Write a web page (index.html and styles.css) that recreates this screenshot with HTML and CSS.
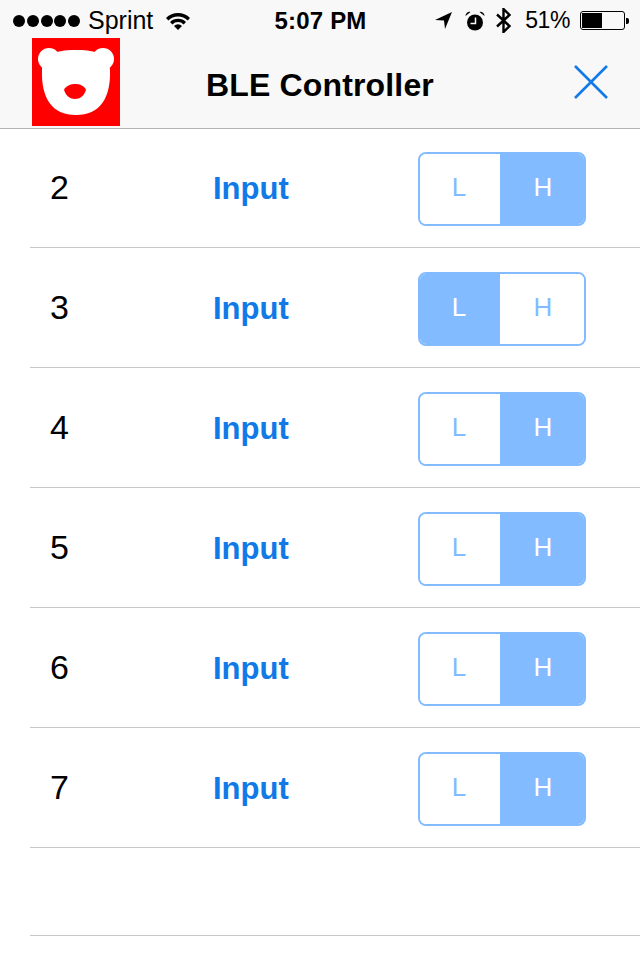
FILE: index.html
```html
<!DOCTYPE html>
<html lang="en">
<head>
    <meta charset="UTF-8">
    <meta name="viewport" content="width=device-width, initial-scale=1.0">
    <title>BLE Controller</title>
    <link rel="stylesheet" href="styles.css">
</head>
<body>
    <header class="top">
        <!-- status bar -->
        <div class="status">
            <div class="status-left">
                <span class="dots"><i></i><i></i><i></i><i></i><i></i></span>
                <span class="carrier">Sprint</span>
                <svg class="wifi" width="24" height="18" viewBox="0 0 24 18">
                    <path d="M0 6 A17 17 0 0 1 24 6 L21.6 8.4 A13.6 13.6 0 0 0 2.4 8.4 Z" fill="#000"/>
                    <path d="M4 10 A11.4 11.4 0 0 1 20 10 L17.6 12.4 A8 8 0 0 0 6.4 12.4 Z" fill="#000"/>
                    <path d="M8 14 A5.7 5.7 0 0 1 16 14 L12 18 Z" fill="#000"/>
                </svg>
            </div>
            <div class="clock">5:07 PM</div>
            <div class="status-right">
                <svg class="arrow" width="17" height="17" viewBox="0 0 17 17">
                    <path d="M17 0 L0 8 L9 8.5 L10 17 Z" fill="#000"/>
                </svg>
                <svg class="alarm" width="20" height="20" viewBox="0 0 20 20">
                    <circle cx="10" cy="11.5" r="8" fill="#000"/>
                    <path d="M10.5 6.5 V12.5 H5.5" fill="none" stroke="#f8f8f8" stroke-width="1.5"/>
                    <path d="M0.5 5 A4 4 0 0 1 5.5 1 Z M19.5 5 A4 4 0 0 0 14.5 1 Z" fill="#000"/>
                </svg>
                <svg class="bt" width="15" height="25" viewBox="0 0 15 25">
                    <path d="M1 6.5 L13.5 18 L7.5 24 V1 L13.5 7 L1 18.5" fill="none" stroke="#000" stroke-width="2.4"/>
                </svg>
                <span class="pct">51%</span>
                <span class="battery"><span class="battery-fill"></span></span>
                <span class="battery-tip"></span>
            </div>
        </div>
        <!-- nav bar -->
        <div class="nav">
            <svg class="logo" width="88" height="88" viewBox="0 0 88 88">
                <rect width="88" height="88" fill="#ff0000"/>
                <circle cx="17" cy="21" r="11" fill="#fff"/>
                <circle cx="71" cy="21" r="11" fill="#fff"/>
                <path d="M10 32 C10 14 30 12 44 12 C58 12 78 14 78 32 C79 60 68 77 44 77 C20 77 9 60 10 32 Z" fill="#fff"/>
                <path d="M32 52 C34 47 40 46 43 46 C47 46 52 47 54 52 C52 58 48 61 43 61 C38 61 34 58 32 52 Z" fill="#ff0000"/>
            </svg>
            <h1 class="title">BLE Controller</h1>
            <svg class="close" width="36" height="36" viewBox="0 0 36 36">
                <path d="M2 2 L34 34 M34 2 L2 34" stroke="#117AE8" stroke-width="2.6" fill="none"/>
            </svg>
        </div>
    </header>

    <ul class="pins">
        <li class="pin">
            <span class="pin-num">2</span>
            <span class="pin-mode">Input</span>
            <div class="seg"><span class="seg-btn">L</span><span class="seg-btn on">H</span></div>
        </li>
        <li class="pin">
            <span class="pin-num">3</span>
            <span class="pin-mode">Input</span>
            <div class="seg"><span class="seg-btn on">L</span><span class="seg-btn">H</span></div>
        </li>
        <li class="pin">
            <span class="pin-num">4</span>
            <span class="pin-mode">Input</span>
            <div class="seg"><span class="seg-btn">L</span><span class="seg-btn on">H</span></div>
        </li>
        <li class="pin">
            <span class="pin-num">5</span>
            <span class="pin-mode">Input</span>
            <div class="seg"><span class="seg-btn">L</span><span class="seg-btn on">H</span></div>
        </li>
        <li class="pin">
            <span class="pin-num">6</span>
            <span class="pin-mode">Input</span>
            <div class="seg"><span class="seg-btn">L</span><span class="seg-btn on">H</span></div>
        </li>
        <li class="pin">
            <span class="pin-num">7</span>
            <span class="pin-mode">Input</span>
            <div class="seg"><span class="seg-btn">L</span><span class="seg-btn on">H</span></div>
        </li>
        <li class="pin pin-empty"></li>
    </ul>
</body>
</html>
```

FILE: styles.css
```css
* {
    box-sizing: border-box;
    margin: 0;
    padding: 0;
    font-family: 'Liberation Sans', Arial, sans-serif;
}
body {
    width: 640px;
    height: 960px;
    overflow: hidden;
    background-color: #fff;
    color: #000;
}
.top {
    height: 129px;
    background-color: #f8f8f8;
    border-bottom: 1px solid #b2b2b2;
}
.status {
    height: 38px;
    padding: 3px 11px 0 13px;
    display: grid;
    grid-template-columns: 1fr auto 1fr;
    align-items: center;
    font-size: 24px;
}
.status-left,
.status-right {
    display: flex;
    align-items: center;
}
.status-right {
    justify-content: flex-end;
}
.dots {
    display: flex;
    gap: 1.75px;
}
.dots i {
    width: 12px;
    height: 12px;
    border-radius: 50%;
    background-color: #000;
}
.carrier {
    margin-left: 8px;
    font-size: 25px;
}
.wifi {
    margin-left: 13px;
}
.clock {
    font-weight: bold;
    font-size: 24px;
    letter-spacing: 0.2px;
    margin-left: -1px;
}
.alarm {
    margin-left: 13px;
}
.bt {
    margin-left: 11px;
}
.pct {
    margin-left: 14px;
    font-size: 23px;
    letter-spacing: -0.4px;
}
.battery {
    width: 45px;
    height: 19px;
    margin-left: 10px;
    border: 1px solid #000;
    border-radius: 3px;
    padding: 1px;
    display: flex;
}
.battery-fill {
    width: 20px;
    background-color: #000;
}
.battery-tip {
    width: 3px;
    height: 6px;
    margin-left: 1px;
    background-color: #000;
    border-radius: 0 2px 2px 0;
}
.nav {
    height: 90px;
    padding: 0 0 0 32px;
    display: flex;
    align-items: flex-start;
}
.title {
    width: 400px;
    margin-top: 27px;
    text-align: center;
    font-size: 32px;
    font-weight: bold;
    line-height: 40px;
    letter-spacing: 0.15px;
}
.close {
    margin: 26px 0 0 53px;
}
.pins {
    list-style: none;
    margin: -1px 0 0 30px;
}
.pin {
    height: 120px;
    padding: 3px 54px 0 20px;
    border-bottom: 1px solid #c8c7cc;
    display: flex;
    align-items: center;
}
.pin-empty {
    height: 88px;
}
.pin-num {
    width: 163px;
    font-size: 34px;
    margin-bottom: 4px;
}
.pin-mode {
    width: 205px;
    font-size: 31px;
    font-weight: bold;
    color: #117AE8;
}
.seg {
    width: 168px;
    height: 74px;
    border: 2px solid #82BBFF;
    border-radius: 8px;
    overflow: hidden;
    display: flex;
    flex-shrink: 0;
}
.seg-btn {
    flex: 1;
    display: flex;
    align-items: center;
    justify-content: center;
    padding: 0 0 4px 2px;
    font-size: 26px;
    color: #82BBFF;
    background-color: #fff;
}
.seg-btn:first-child {
    flex: none;
    width: 80px;
    padding: 0 2px 4px 0;
}
.seg-btn.on {
    background-color: #82BBFF;
    color: #fff;
}
```
